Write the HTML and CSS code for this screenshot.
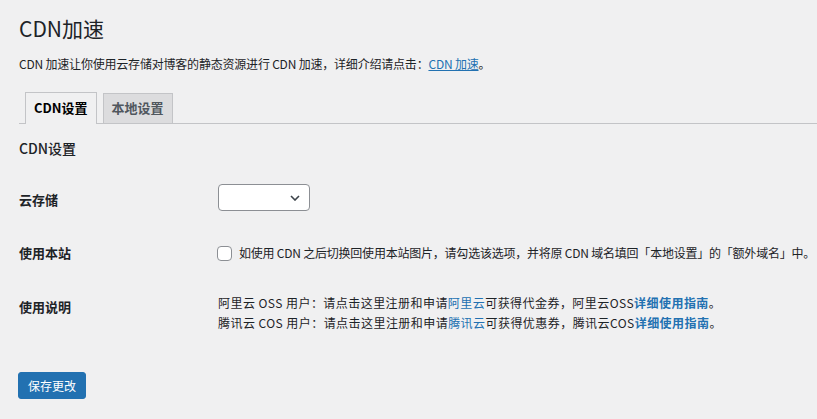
FILE: index.html
```html
<!DOCTYPE html>
<html lang="zh-CN">
<head>
<meta charset="utf-8">
<title>CDN加速</title>
<link rel="stylesheet" href="styles.css">
</head>
<body>
<div class="wrap">
  <h1 class="title">CDN加速</h1>
  <p class="intro">CDN 加速让你使用云存储对博客的静态资源进行 CDN 加速，详细介绍请点击：<a class="ulink" href="#">CDN 加速</a>。</p>
  <nav class="tabs">
    <a class="tab tab-active" href="#">CDN设置</a>
    <a class="tab" href="#">本地设置</a>
  </nav>
  <h2 class="section">CDN设置</h2>
  <div class="form">
    <div class="row row-storage">
      <div class="label">云存储</div>
      <div class="field">
        <div class="select">
          <svg class="chev" width="10" height="6" viewBox="0 0 10 6"><path d="M1 1l4 4 4-4" fill="none" stroke="#3c434a" stroke-width="1.6"/></svg>
        </div>
      </div>
    </div>
    <div class="row row-local">
      <div class="label">使用本站</div>
      <div class="field check-field">
        <span class="checkbox"></span>
        <span class="check-text">如使用 CDN 之后切换回使用本站图片，请勾选该选项，并将原 CDN 域名填回「本地设置」的「额外域名」中。</span>
      </div>
    </div>
    <div class="row row-help">
      <div class="label">使用说明</div>
      <div class="field help">
        <div>阿里云 OSS 用户：请点击这里注册和申请<a href="#">阿里云</a>可获得代金券，阿里云OSS<a class="strong" href="#">详细使用指南</a>。</div>
        <div>腾讯云 COS 用户：请点击这里注册和申请<a href="#">腾讯云</a>可获得优惠券，腾讯云COS<a class="strong" href="#">详细使用指南</a>。</div>
      </div>
    </div>
  </div>
  <div class="actions"><button class="btn">保存更改</button></div>
</div>
</body>
</html>
```

FILE: styles.css
```css
* { box-sizing: border-box; }
body {
  margin: 0;
  background: #f0f0f1;
  color: #1d2327;
  font-family: "Noto Sans CJK SC", "Noto Sans", sans-serif;
  font-size: 12px;
}
.wrap { padding: 15px 0 0 19px; }
.title {
  margin: 0;
  font-size: 21px;
  font-weight: 400;
  line-height: 27px;
}
.intro {
  margin: 12px 0 0;
  line-height: 20px;
  font-size: 12px;
  letter-spacing: -0.2px;
}
a { color: #2271b1; text-decoration: none; }
.ulink { text-decoration: underline; }
.tabs {
  margin-top: 18px;
  display: flex;
  align-items: flex-end;
  border-bottom: 1px solid #c3c4c7;
  height: 32px;
}
.tab {
  margin-left: 6px;
  padding: 4px 8px 5px;
  border: 1px solid #c3c4c7;
  border-bottom: none;
  background: #dcdcde;
  color: #50575e;
  font-size: 13px;
  font-weight: 700;
  line-height: 20px;
  height: 30px;
}
.tab-active {
  background: #f0f0f1;
  color: #000;
  height: 32px;
  padding-top: 5px;
  margin-bottom: -1px;
}
.section {
  margin: 14px 0 0;
  font-size: 14px;
  font-weight: 500;
  line-height: 20px;
}
.form { margin-top: 26px; }
.row { display: flex; align-items: flex-start; }
.label {
  width: 199px;
  flex: none;
  font-size: 13px;
  font-weight: 700;
  line-height: 20px;
}
.row-storage .label { padding-top: 6px; }
.select {
  width: 92px;
  height: 27px;
  background: #fff;
  border: 1px solid #8c8f94;
  border-radius: 4px;
  display: flex;
  align-items: center;
  justify-content: flex-end;
  padding-right: 9px;
}
.row-local { margin-top: 32px; }
.check-field { display: flex; align-items: center; line-height: 20px; }
.check-text { white-space: nowrap; letter-spacing: -0.22px; }
.checkbox {
  width: 15px;
  height: 15px;
  border: 1px solid #8c8f94;
  border-radius: 4px;
  background: #fff;
  margin: 0 7px 0 -1px;
  flex: none;
}
.row-help { margin-top: 30px; }
.row-help .label { padding-top: 4px; }
.help { line-height: 20px; letter-spacing: 0.45px; }
.strong { font-weight: 700; }
.actions { margin-top: 39px; }
.btn {
  height: 27px;
  padding: 0 9px;
  margin-left: -1px;
  background: #2271b1;
  border: 1px solid #2271b1;
  border-radius: 3px;
  color: #fff;
  font-family: inherit;
  font-size: 12px;
  line-height: 25px;
}
```
